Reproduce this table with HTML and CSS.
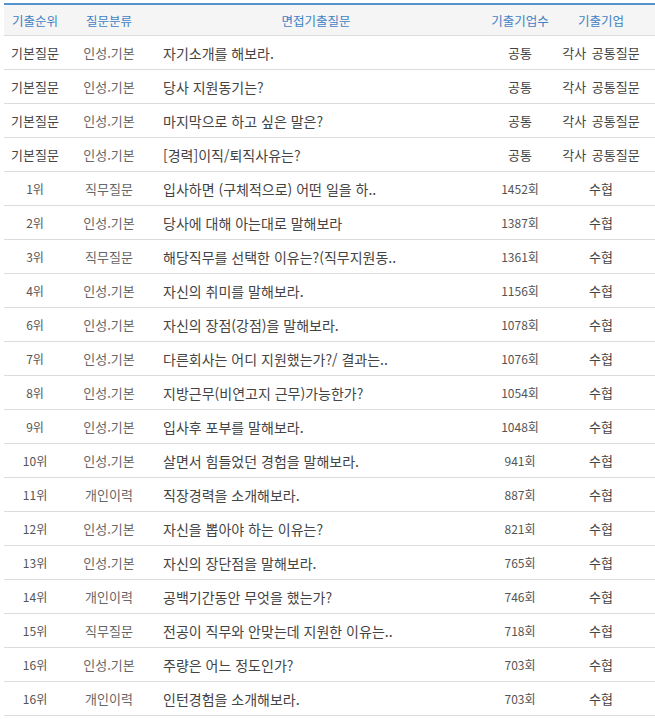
FILE: index.html
```html
<!DOCTYPE html>
<html lang="ko">
<head>
<meta charset="utf-8">
<link rel="stylesheet" href="styles.css">
</head>
<body>
<table class="qtable">
  <colgroup>
    <col class="c-rank"><col class="c-cat"><col class="c-q"><col class="c-cnt"><col class="c-co">
  </colgroup>
  <thead>
    <tr><th>기출순위</th><th>질문분류</th><th>면접기출질문</th><th>기출기업수</th><th class="co">기출기업</th></tr>
  </thead>
  <tbody>
    <tr><td class="rank basic">기본질문</td><td class="cat">인성.기본</td><td class="q">자기소개를 해보라.</td><td class="cnt com">공통</td><td class="co">각사 공통질문</td></tr>
    <tr><td class="rank basic">기본질문</td><td class="cat">인성.기본</td><td class="q">당사 지원동기는?</td><td class="cnt com">공통</td><td class="co">각사 공통질문</td></tr>
    <tr><td class="rank basic">기본질문</td><td class="cat">인성.기본</td><td class="q">마지막으로 하고 싶은 말은?</td><td class="cnt com">공통</td><td class="co">각사 공통질문</td></tr>
    <tr><td class="rank basic">기본질문</td><td class="cat">인성.기본</td><td class="q">[경력]이직/퇴직사유는?</td><td class="cnt com">공통</td><td class="co">각사 공통질문</td></tr>
    <tr><td class="rank">1위</td><td class="cat">직무질문</td><td class="q">입사하면 (구체적으로) 어떤 일을 하..</td><td class="cnt">1452회</td><td class="co">수협</td></tr>
    <tr><td class="rank">2위</td><td class="cat">인성.기본</td><td class="q">당사에 대해 아는대로 말해보라</td><td class="cnt">1387회</td><td class="co">수협</td></tr>
    <tr><td class="rank">3위</td><td class="cat">직무질문</td><td class="q">해당직무를 선택한 이유는?(직무지원동..</td><td class="cnt">1361회</td><td class="co">수협</td></tr>
    <tr><td class="rank">4위</td><td class="cat">인성.기본</td><td class="q">자신의 취미를 말해보라.</td><td class="cnt">1156회</td><td class="co">수협</td></tr>
    <tr><td class="rank">6위</td><td class="cat">인성.기본</td><td class="q">자신의 장점(강점)을 말해보라.</td><td class="cnt">1078회</td><td class="co">수협</td></tr>
    <tr><td class="rank">7위</td><td class="cat">인성.기본</td><td class="q">다른회사는 어디 지원했는가?/ 결과는..</td><td class="cnt">1076회</td><td class="co">수협</td></tr>
    <tr><td class="rank">8위</td><td class="cat">인성.기본</td><td class="q">지방근무(비연고지 근무)가능한가?</td><td class="cnt">1054회</td><td class="co">수협</td></tr>
    <tr><td class="rank">9위</td><td class="cat">인성.기본</td><td class="q">입사후 포부를 말해보라.</td><td class="cnt">1048회</td><td class="co">수협</td></tr>
    <tr><td class="rank">10위</td><td class="cat">인성.기본</td><td class="q">살면서 힘들었던 경험을 말해보라.</td><td class="cnt">941회</td><td class="co">수협</td></tr>
    <tr><td class="rank">11위</td><td class="cat">개인이력</td><td class="q">직장경력을 소개해보라.</td><td class="cnt">887회</td><td class="co">수협</td></tr>
    <tr><td class="rank">12위</td><td class="cat">인성.기본</td><td class="q">자신을 뽑아야 하는 이유는?</td><td class="cnt">821회</td><td class="co">수협</td></tr>
    <tr><td class="rank">13위</td><td class="cat">인성.기본</td><td class="q">자신의 장단점을 말해보라.</td><td class="cnt">765회</td><td class="co">수협</td></tr>
    <tr><td class="rank">14위</td><td class="cat">개인이력</td><td class="q">공백기간동안 무엇을 했는가?</td><td class="cnt">746회</td><td class="co">수협</td></tr>
    <tr><td class="rank">15위</td><td class="cat">직무질문</td><td class="q">전공이 직무와 안맞는데 지원한 이유는..</td><td class="cnt">718회</td><td class="co">수협</td></tr>
    <tr><td class="rank">16위</td><td class="cat">인성.기본</td><td class="q">주량은 어느 정도인가?</td><td class="cnt">703회</td><td class="co">수협</td></tr>
    <tr><td class="rank">16위</td><td class="cat">개인이력</td><td class="q">인턴경험을 소개해보라.</td><td class="cnt">703회</td><td class="co">수협</td></tr>
  </tbody>
</table>
</body>
</html>
```

FILE: styles.css
```css
html, body {
  margin: 0;
  padding: 0;
  background: #fff;
}
body {
  padding: 3px 0 0 4px;
  font-family: "Noto Sans CJK KR", "Noto Sans", sans-serif;
  overflow: hidden;
}
.qtable {
  width: 651px;
  table-layout: fixed;
  border-collapse: collapse;
  border-top: 2px solid #5593cf;
}
.c-rank { width: 62px; }
.c-cat { width: 86px; }
.c-q { width: 328px; }
.c-cnt { width: 80px; }
.c-co { width: 95px; }

.qtable th {
  height: 30px;
  padding: 0;
  background: #f5f5f5;
  border-bottom: 1px solid #dcdcdc;
  color: #3f7fc4;
  font-size: 12.5px;
  font-weight: normal;
  text-align: center;
  vertical-align: middle;
}
.qtable td {
  height: 33px;
  padding: 0;
  border-bottom: 1px solid #dcdcdc;
  text-align: center;
  vertical-align: middle;
  font-size: 12px;
  color: #555;
  white-space: nowrap;
  overflow: hidden;
}
.qtable th.co, .qtable td.co {
  padding-right: 13px;
}
.qtable td.rank {
  color: #555;
  font-size: 12px;
}
.qtable td.rank.basic {
  color: #444;
  font-size: 13px;
}
.qtable td.cat {
  color: #666;
  font-size: 13px;
}
.qtable td.q {
  text-align: left;
  padding-left: 11px;
  font-size: 14px;
  color: #444;
}
.qtable td.cnt {
  font-size: 12px;
  color: #555;
}
.qtable td.cnt.com {
  font-size: 13px;
  color: #444;
}
.qtable td.co {
  font-size: 13px;
  color: #444;
  word-spacing: 2px;
}
```
